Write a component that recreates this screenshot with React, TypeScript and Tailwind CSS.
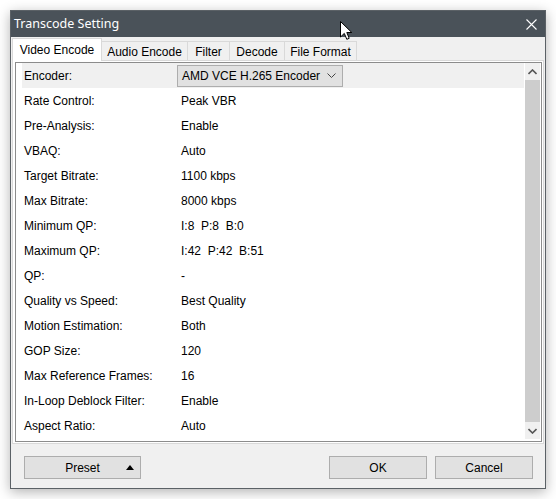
import React from "react";

const rows: [string, string][] = [
  ["Rate Control:", "Peak VBR"],
  ["Pre-Analysis:", "Enable"],
  ["VBAQ:", "Auto"],
  ["Target Bitrate:", "1100 kbps"],
  ["Max Bitrate:", "8000 kbps"],
  ["Minimum QP:", "I:8  P:8  B:0"],
  ["Maximum QP:", "I:42  P:42  B:51"],
  ["QP:", "-"],
  ["Quality vs Speed:", "Best Quality"],
  ["Motion Estimation:", "Both"],
  ["GOP Size:", "120"],
  ["Max Reference Frames:", "16"],
  ["In-Loop Deblock Filter:", "Enable"],
  ["Aspect Ratio:", "Auto"],
];

const tabs = ["Audio Encode", "Filter", "Decode", "File Format"];
const tabW = [86, 42, 55, 72];

export default function App() {
  return (
    <div
      className="relative w-[556px] h-[499px] bg-white pt-[10px] pl-[10px]"
      style={{ fontFamily: '"Liberation Sans", Arial, sans-serif' }}
    >
      <div className="w-[536px] h-[479px] border border-[#5b6166] bg-[#f0f0f0] flex flex-col shadow-[0_3px_12px_rgba(0,0,0,0.3)]">
        {/* Title bar */}
        <div className="h-[26px] bg-[#4a5259] flex items-center justify-between pl-[3px] pr-[8px] shrink-0">
          <span
            className="text-white text-[12.5px] leading-none"
            style={{ fontFamily: '"Noto Sans", "Open Sans", sans-serif' }}
          >
            Transcode Setting
          </span>
          <svg width="11" height="11" viewBox="0 0 11 11">
            <path d="M0.5 0.5 L10.5 10.5 M10.5 0.5 L0.5 10.5" stroke="#ffffff" strokeWidth="1.1" />
          </svg>
        </div>

        {/* Tabs */}
        <div className="flex items-end h-[22px] mt-[1px] ml-[1px] shrink-0 relative z-10">
          <div className="w-[90px] h-[22px] bg-white border border-[#d9d9d9] border-b-0 flex items-center justify-center text-[12px] text-black pb-[1px] -mb-[1px] h-[23px]">
            Video Encode
          </div>
          {tabs.map((t, i) => (
            <div
              key={t}
              style={{ width: tabW[i] }}
              className="h-[19px] bg-[#f0f0f0] border border-[#d9d9d9] border-b-0 border-l-0 flex items-center justify-center text-[12px] text-black pt-[1px]"
            >
              {t}
            </div>
          ))}
        </div>

        {/* Panel */}
        <div className="mx-[1px] h-[384px] border border-[#d9d9d9] bg-white pt-[1px] pl-[2px] pr-[1px] shrink-0">
          <div className="h-[380px] border border-[#8c8c8c] bg-white flex pl-[6px] pr-[1px]">
            <div className="flex-1 flex flex-col mr-[1px]">
              <div className="h-[25px] bg-[#f0f0f0] flex items-center shrink-0">
                <div className="w-[155px] pl-[2px] text-[12px] text-black">Encoder:</div>
                <div className="w-[166px] h-[22px] bg-[#e1e1e1] border border-[#adadad] flex items-center justify-between pl-[4px] pr-[6px] text-[12px] text-black">
                  <span>AMD VCE H.265 Encoder</span>
                  <svg width="9" height="5" viewBox="0 0 9 5">
                    <path d="M0.5 0.5 L4.5 4.5 L8.5 0.5" fill="none" stroke="#444" strokeWidth="1" />
                  </svg>
                </div>
              </div>
              {rows.map(([l, v]) => (
                <div key={l} className="h-[25px] flex items-center shrink-0 text-[12px] text-black">
                  <div className="w-[159px] pl-[2px]">{l}</div>
                  <div className="whitespace-pre">{v}</div>
                </div>
              ))}
            </div>
            {/* Scrollbar */}
            <div className="w-[15px] flex flex-col pb-[2px]">
              <div className="h-[17px] bg-[#f0f0f0] flex items-center justify-center">
                <svg width="9" height="6" viewBox="0 0 9 6">
                  <path d="M0.5 5 L4.5 1 L8.5 5" fill="none" stroke="#555" strokeWidth="1.6" />
                </svg>
              </div>
              <div className="flex-1 bg-[#cdcdcd]" />
              <div className="h-[17px] bg-[#f0f0f0] flex items-center justify-center">
                <svg width="9" height="6" viewBox="0 0 9 6">
                  <path d="M0.5 1 L4.5 5 L8.5 1" fill="none" stroke="#555" strokeWidth="1.6" />
                </svg>
              </div>
            </div>
          </div>
        </div>

        {/* Buttons */}
        <div className="flex items-start pt-[12px] pl-[13px] pr-[12px]">
          <div className="relative w-[117px] h-[23px] bg-[#e1e1e1] border border-[#adadad] flex items-center justify-center text-[12px] text-black">
            Preset
            <svg className="absolute right-[6px] top-[8px]" width="8" height="5" viewBox="0 0 8 5">
              <path d="M0 5 L4 0 L8 5 Z" fill="#000" />
            </svg>
          </div>
          <div className="flex-1" />
          <div className="w-[98px] h-[23px] bg-[#e1e1e1] border border-[#adadad] flex items-center justify-center text-[12px] text-black">
            OK
          </div>
          <div className="w-[98px] h-[23px] ml-[8px] bg-[#e1e1e1] border border-[#adadad] flex items-center justify-center text-[12px] text-black">
            Cancel
          </div>
        </div>
      </div>

      {/* Mouse cursor */}
      <svg className="absolute left-[340px] top-[21px]" width="13" height="20" viewBox="0 0 13 20">
        <path
          d="M0.5 0.5 L0.5 16 L4.3 12.4 L6.8 18.3 L9.2 17.3 L6.8 11.5 L11.8 11.5 Z"
          fill="#fff"
          stroke="#000"
          strokeWidth="1"
          strokeLinejoin="miter"
        />
      </svg>
    </div>
  );
}
